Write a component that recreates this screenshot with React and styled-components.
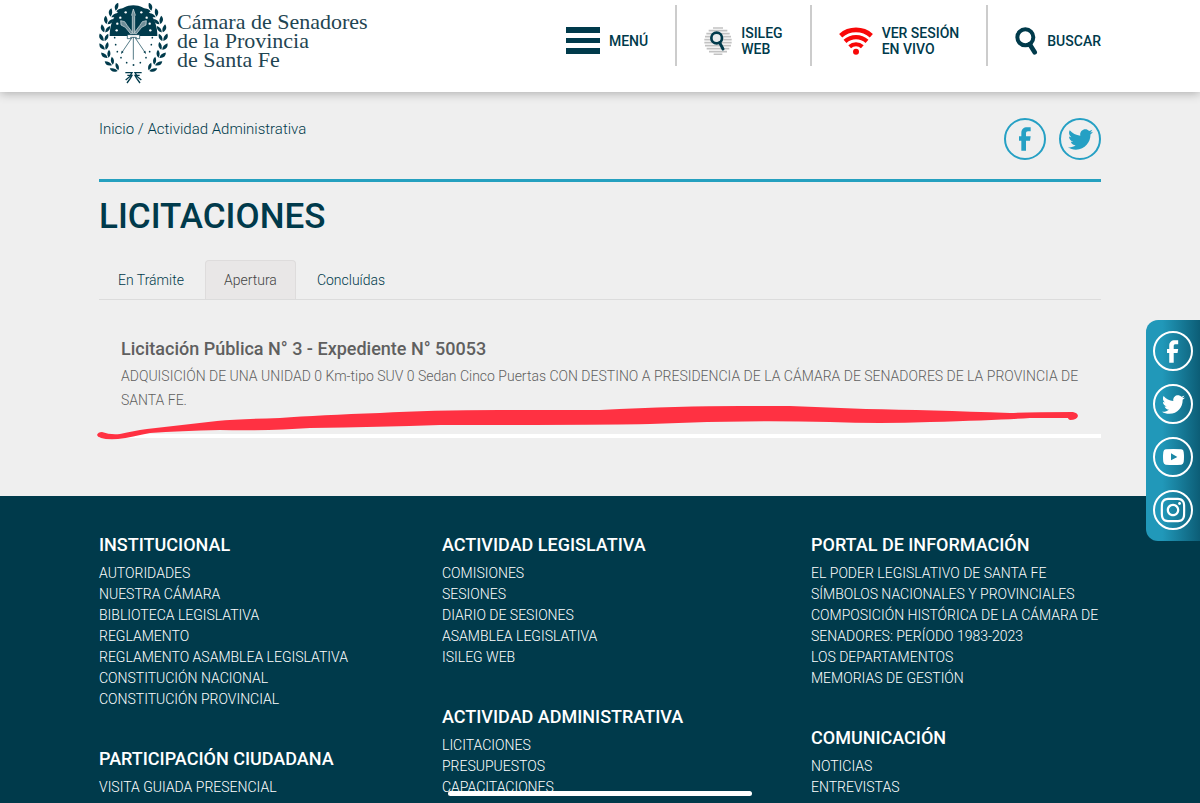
import React from "react";
import styled, { createGlobalStyle } from "styled-components";
import { FaInstagram, FaTwitter } from "react-icons/fa";

const GlobalStyle = createGlobalStyle`
  * {
    box-sizing: border-box;
  }
  body {
    margin: 0;
    background: #efefef;
    color: #003a4b;
    font-family: Roboto, "Open Sans", sans-serif;
    font-weight: 300;
  }
  a {
    color: inherit;
    text-decoration: none;
  }
`;

const Container = styled.div`
  max-width: 1050px;
  margin: 0 auto;
  padding: 0 24px;
`;

/* Header */
const Header = styled.header`
  position: relative;
  background: #fff;
  box-shadow: 0 1px 10px rgba(0, 0, 0, 0.3);
`;
const HeaderInner = styled(Container)`
  display: flex;
  justify-content: space-between;
  height: 92px;
`;
const Brand = styled.a`
  display: flex;
  gap: 8px;
  padding-top: 3px;
`;
const BrandName = styled.span`
  display: flex;
  flex-direction: column;
  padding-top: 9px;
  color: #1f4552;
  font-family: "Liberation Serif", serif;
  font-weight: 400;
  font-size: 22px;
  line-height: 19px;
  white-space: nowrap;
`;
const Nav = styled.nav`
  display: flex;
  align-items: flex-start;
  padding-top: 5px;
`;
const NavButton = styled.button`
  display: flex;
  align-items: center;
  gap: 9px;
  height: 61px;
  padding: 10px 27px 0;
  border: 0;
  border-right: 2px solid #ccc;
  background: none;
  color: #003a4b;
  font-family: inherit;
  font-weight: 500;
  font-size: 14px;
  line-height: 16px;
  text-align: left;
  white-space: nowrap;
  cursor: pointer;

  &:last-child {
    gap: 5px;
    padding-right: 0;
    border-right: 0;
  }
`;

/* Page head */
const TopRow = styled.div`
  display: flex;
  justify-content: space-between;
  padding: 26px 0 19px;
  border-bottom: 3px solid #25a0bf;
`;
const Breadcrumb = styled.nav`
  padding-top: 1px;
  font-size: 15px;
  line-height: 20px;
`;
const Share = styled.div`
  display: flex;
  gap: 13px;
`;
const SocialLink = styled.a`
  display: flex;
  align-items: center;
  justify-content: center;
  width: ${({ $size }) => $size}px;
  height: ${({ $size }) => $size}px;
  border: 2px solid currentColor;
  border-radius: 50%;
`;
const ShareLink = styled(SocialLink)`
  color: #25a0c4;
`;
const Title = styled.h1`
  margin: 14px 0 22px;
  font-weight: 500;
  font-size: 35px;
  line-height: 42px;
`;

/* Tabs */
const Tabs = styled.div`
  display: flex;
  gap: 2px;
  border-bottom: 1px solid #dcdcdc;
`;
const Tab = styled.button`
  height: 39px;
  padding: 0 18px;
  border: 1px solid ${({ $active }) => ($active ? "#dedcdc" : "transparent")};
  border-bottom: 0;
  border-radius: 4px 4px 0 0;
  background: ${({ $active }) => ($active ? "#e9e7e7" : "none")};
  color: ${({ $active }) => ($active ? "#444" : "#003a4b")};
  font: inherit;
  font-size: 14px;
  cursor: pointer;
`;

/* Tender */
const Tender = styled.article`
  position: relative;
  padding: 37px 16px 22px 22px;
  border-bottom: 4px solid #fff;
  color: #5f5f5f;
`;
const TenderTitle = styled.h2`
  margin: 0 0 3px;
  font-weight: 500;
  font-size: 18px;
  line-height: 24px;
`;
const TenderText = styled.p`
  margin: 0;
  font-size: 14px;
  line-height: 24px;
`;
const Underline = styled.svg`
  position: absolute;
  left: -2px;
  bottom: -6px;
  width: 98%;
  height: 36px;
`;

/* Footer */
const Footer = styled.footer`
  margin-top: 58px;
  padding: 35px 0 5px;
  background: #003a4b;
  color: #fff;
`;
const FooterGrid = styled(Container)`
  display: grid;
  grid-template-columns: 343fr 369fr 290fr;
`;
const Column = styled.div`
  display: flex;
  flex-direction: column;
  gap: 35px;
`;
const GroupTitle = styled.h3`
  margin: 0 0 4px;
  font-weight: 500;
  font-size: 18px;
  line-height: 28px;
`;
const LinkList = styled.ul`
  margin: 0;
  padding: 0;
  list-style: none;
  font-size: 14px;
  line-height: 21px;
`;

/* Floating parts */
const SideBar = styled.aside`
  position: fixed;
  top: 320px;
  right: 0;
  display: flex;
  flex-direction: column;
  gap: 13px;
  padding: 11px 7px;
  border-radius: 12px 0 0 12px;
  background: linear-gradient(90deg, #2198b9 30%, #0c5d76);
  color: #fff;
`;
const HomeBar = styled.div`
  position: fixed;
  bottom: 7px;
  left: 50%;
  width: 304px;
  height: 5px;
  border-radius: 3px;
  background: #fff;
  transform: translateX(-50%);
`;

const LEAVES = [-58, -44, -30, -16, -2, 12, 26, 40, 54];
const DARK_DOTS = [[74, 112], [77, 133], [82, 154], [93, 172], [110, 187], [130, 194]];
const WHITE_DOTS = [[80, 90], [82, 70], [91, 52], [107, 36]];

const mirror = (dots) => [...dots, ...dots.map(([x, y]) => [261 - x, y])];

const Branch = () =>
  LEAVES.map((deg) => {
    const rad = (deg * Math.PI) / 180;
    const x = 130 - 88 * Math.cos(rad);
    const y = 118 + 108 * Math.sin(rad);
    return (
      <g key={deg} transform={`translate(${x} ${y}) rotate(${-deg * 0.8})`}>
        <path d="M-1 8C-14 4-17-5-13-14C-4-8 0-2-1 8Z" />
        <path d="M2 8C0-3 4-9 12-14C15-4 11 4 2 8Z" />
      </g>
    );
  });

const Emblem = () => (
  <svg width="70" height="82" viewBox="27 8 210 246" fill="#003a4b" aria-hidden="true">
    <path d="M59 107C59 52 90 15 130 15S202 52 202 107Z" />
    <Branch />
    <g transform="translate(261 0) scale(-1 1)">
      <Branch />
    </g>
    {mirror(WHITE_DOTS).map(([x, y]) => (
      <circle key={`${x}-${y}`} cx={x} cy={y} r="3.5" fill="#fff" />
    ))}
    {mirror(DARK_DOTS).map(([x, y]) => (
      <circle key={`${x}-${y}`} cx={x} cy={y} r="2.5" />
    ))}
    <path d="M130 110V178M126 112L96 156M135 112L165 156" fill="none" stroke="#003a4b" strokeWidth="2" />
    <path d="M93 161l2-10 6 4zM168 161l-8-6 6-4z" />
    <g fill="#6f8d97" stroke="#dfe7e9" strokeWidth="2">
      <path d="M127 100V48L125 44L130 26L136 44L134 48V100Z" />
      <path d="M123 102L106 81L93 74L92 61L104 64L112 76L127 96ZM138 102L155 81L168 74L169 61L157 64L149 76L134 96Z" />
    </g>
    <path d="M112 103h37v12h-10v-4h-17v4h-10z" fill="#fff" stroke="#003a4b" strokeWidth="2" />
    <path
      d="M106 217h20l-7 12-12 10M112 225h14l-5 9-10 14M155 217h-20l7 12 12 10M149 225h-14l5 9 10 14"
      fill="none"
      stroke="#003a4b"
      strokeWidth="4"
    />
  </svg>
);

const MenuIcon = () => (
  <svg width="34" height="27" viewBox="0 0 34 27" fill="#003a4b" aria-hidden="true">
    <path d="M0 0h34v6H0zM0 11h34v5H0zM0 21h34v6H0z" />
  </svg>
);

const IsilegIcon = () => (
  <svg width="28" height="28" viewBox="0 0 84 84" fill="none" aria-hidden="true">
    <path
      d="M27 3h30M14 11h56M7 20h70M3 29h78M1 38h82M1 47h82M3 56h78M8 65h68M15 74h54M29 82h26"
      stroke="#c2c2c2"
      strokeWidth="5"
    />
    <circle cx="38" cy="33" r="16" fill="#e8ebec" stroke="#003a4b" strokeWidth="8" />
    <path d="M47 47L57 66" stroke="#003a4b" strokeWidth="9" strokeLinecap="round" />
  </svg>
);

const LiveIcon = () => (
  <svg width="34" height="28" viewBox="0 0 102 84" fill="none" stroke="#f80808" aria-hidden="true">
    <path d="M5 26C31 3 71 3 97 26" strokeWidth="14" />
    <path d="M18 43C37 26 65 26 84 43" strokeWidth="13" />
    <path d="M32 59C43 49 59 49 70 59" strokeWidth="12" />
    <circle cx="51" cy="74" r="9" fill="#f80808" stroke="none" />
  </svg>
);

const SearchIcon = () => (
  <svg width="27" height="28" viewBox="0 0 81 84" fill="none" stroke="#003a4b" aria-hidden="true">
    <circle cx="31" cy="31" r="24" strokeWidth="12" />
    <path d="M44 52L59 76" strokeWidth="14" strokeLinecap="round" />
  </svg>
);

const FacebookIcon = ({ height }) => (
  <svg height={height} viewBox="0 0 36 72" fill="currentColor" aria-hidden="true">
    <path d="M35 1v12h-8c-4 0-6 2-6 6v9h14l-2 13H21v30H7V41H0V28h7V18C7 7 14 1 24 1z" />
  </svg>
);

const YoutubeIcon = () => (
  <svg width="21" height="16" viewBox="0 0 63 48" fill="currentColor" aria-hidden="true">
    <path
      fillRule="evenodd"
      d="M8 1Q31-1 55 1Q62 2 62 9Q64 24 62 39Q61 46 55 47Q31 49 8 47Q2 46 1 39Q-1 24 1 9Q2 2 8 1ZM24 13V34L43 24Z"
    />
  </svg>
);

const institutional = [
  {
    title: "INSTITUCIONAL",
    links: [
      "AUTORIDADES",
      "NUESTRA CÁMARA",
      "BIBLIOTECA LEGISLATIVA",
      "REGLAMENTO",
      "REGLAMENTO ASAMBLEA LEGISLATIVA",
      "CONSTITUCIÓN NACIONAL",
      "CONSTITUCIÓN PROVINCIAL",
    ],
  },
  { title: "PARTICIPACIÓN CIUDADANA", links: ["VISITA GUIADA PRESENCIAL"] },
];

const activity = [
  {
    title: "ACTIVIDAD LEGISLATIVA",
    links: ["COMISIONES", "SESIONES", "DIARIO DE SESIONES", "ASAMBLEA LEGISLATIVA", "ISILEG WEB"],
  },
  { title: "ACTIVIDAD ADMINISTRATIVA", links: ["LICITACIONES", "PRESUPUESTOS", "CAPACITACIONES"] },
];

const information = [
  {
    title: "PORTAL DE INFORMACIÓN",
    links: [
      "EL PODER LEGISLATIVO DE SANTA FE",
      "SÍMBOLOS NACIONALES Y PROVINCIALES",
      "COMPOSICIÓN HISTÓRICA DE LA CÁMARA DE SENADORES: PERÍODO 1983-2023",
      "LOS DEPARTAMENTOS",
      "MEMORIAS DE GESTIÓN",
    ],
  },
  { title: "COMUNICACIÓN", links: ["NOTICIAS", "ENTREVISTAS"] },
];

const columns = [institutional, activity, information];
const tabs = ["En Trámite", "Apertura", "Concluídas"];

const App = () => {
  const [active, setActive] = React.useState("Apertura");

  return (
    <>
      <GlobalStyle />
      <Header>
        <HeaderInner>
          <Brand href="#">
            <Emblem />
            <BrandName>
              <span>Cámara de Senadores</span>
              <span>de la Provincia</span>
              <span>de Santa Fe</span>
            </BrandName>
          </Brand>
          <Nav>
            <NavButton>
              <MenuIcon />
              MENÚ
            </NavButton>
            <NavButton>
              <IsilegIcon />
              <span>
                ISILEG
                <br />
                WEB
              </span>
            </NavButton>
            <NavButton>
              <LiveIcon />
              <span>
                VER SESIÓN
                <br />
                EN VIVO
              </span>
            </NavButton>
            <NavButton>
              <SearchIcon />
              BUSCAR
            </NavButton>
          </Nav>
        </HeaderInner>
      </Header>

      <Container as="main">
        <TopRow>
          <Breadcrumb>
            <a href="#">Inicio</a> / Actividad Administrativa
          </Breadcrumb>
          <Share>
            <ShareLink $size={42} href="#" aria-label="Facebook">
              <FacebookIcon height={24} />
            </ShareLink>
            <ShareLink $size={42} href="#" aria-label="Twitter">
              <FaTwitter size={25} />
            </ShareLink>
          </Share>
        </TopRow>
        <Title>LICITACIONES</Title>
        <Tabs role="tablist">
          {tabs.map((tab) => (
            <Tab
              key={tab}
              role="tab"
              aria-selected={tab === active}
              $active={tab === active}
              onClick={() => setActive(tab)}
            >
              {tab}
            </Tab>
          ))}
        </Tabs>
        <Tender>
          <TenderTitle>Licitación Pública N° 3 - Expediente N° 50053</TenderTitle>
          <TenderText>
            ADQUISICIÓN DE UNA UNIDAD 0 Km-tipo SUV 0 Sedan Cinco Puertas CON DESTINO A PRESIDENCIA DE
            LA CÁMARA DE SENADORES DE LA PROVINCIA DE SANTA FE.
          </TenderText>
          <Underline viewBox="97 404 982 36" preserveAspectRatio="none" aria-hidden="true">
            <path
              fill="#ff3142"
              d="M97 435Q98 432 102 432Q110 435 120 434C130 432 137 430 147 429Q182 425 217 421Q240 419 280 418Q320 415 380 413Q430 410 500 410H600Q680 406 740 406H790L866 409Q930 410 1010 413Q1030 412 1073 412Q1078 413 1078 416Q1077 420 1070 420Q1068 419 1068 418H1030Q1000 420 930 422Q880 424 830 422Q740 420 650 424Q600 425 440 425Q380 427 310 428Q270 431 220 430Q180 431 150 433C138 435 128 438 118 439Q98 440 97 435Z"
            />
          </Underline>
        </Tender>
      </Container>

      <Footer>
        <FooterGrid>
          {columns.map((groups) => (
            <Column key={groups[0].title}>
              {groups.map((group) => (
                <section key={group.title}>
                  <GroupTitle>{group.title}</GroupTitle>
                  <LinkList>
                    {group.links.map((link) => (
                      <li key={link}>
                        <a href="#">{link}</a>
                      </li>
                    ))}
                  </LinkList>
                </section>
              ))}
            </Column>
          ))}
        </FooterGrid>
      </Footer>

      <SideBar>
        <SocialLink $size={40} href="#" aria-label="Facebook">
          <FacebookIcon height={23} />
        </SocialLink>
        <SocialLink $size={40} href="#" aria-label="Twitter">
          <FaTwitter size={23} />
        </SocialLink>
        <SocialLink $size={40} href="#" aria-label="YouTube">
          <YoutubeIcon />
        </SocialLink>
        <SocialLink $size={40} href="#" aria-label="Instagram">
          <FaInstagram size={28} />
        </SocialLink>
      </SideBar>
      <HomeBar />
    </>
  );
};

export default App;
